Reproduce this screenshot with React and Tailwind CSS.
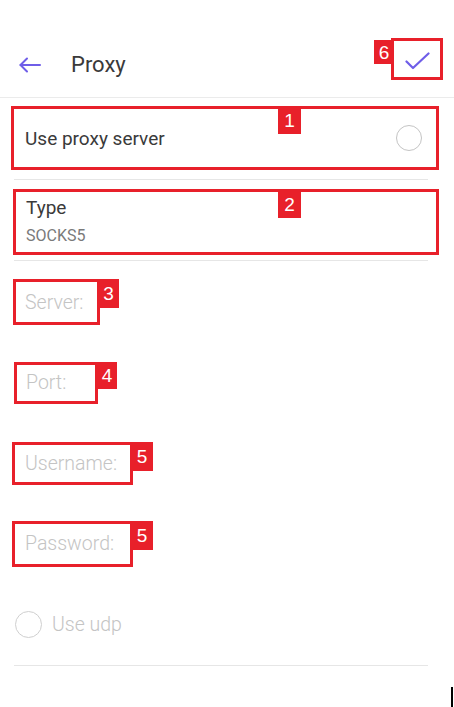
import React from "react";

function Label({ n, className }) {
  return (
    <div
      className={`absolute bg-[#e8202a] text-white flex items-center justify-center text-[19px] leading-none ${className}`}
      style={{ fontFamily: '"Liberation Sans", Arial, sans-serif' }}
    >
      {n}
    </div>
  );
}

const fields = [
  { t: "Server:", n: "3", box: "ml-[13px] w-[87px] h-[46px] pl-[9px]", lab: "left-[82px] w-[21px] h-[29px]" },
  { t: "Port:", n: "4", box: "ml-[14px] w-[84px] h-[42px] pl-[9px]", lab: "left-[80px] w-[20px] h-[27px]" },
  { t: "Username:", n: "5", box: "ml-[12px] w-[121px] h-[43px] pl-[10px]", lab: "left-[116px] w-[22px] h-[29px]" },
  { t: "Password:", n: "5", box: "ml-[12px] w-[121px] h-[46px] pl-[10px]", lab: "left-[116px] w-[22px] h-[29px]" },
];

export default function App() {
  return (
    <div
      className="relative w-[454px] h-[707px] bg-white overflow-hidden antialiased"
      style={{ fontFamily: 'Roboto, "Noto Sans", sans-serif' }}
    >
      {/* Header */}
      <div className="h-[98px] pt-[32px] flex items-center border-b border-[#ebebeb]">
        <svg width="24" height="16" viewBox="0 0 24 16" className="ml-[18px]" fill="none" stroke="#6f5ee8" strokeWidth="2" strokeLinecap="round" strokeLinejoin="round">
          <path d="M22 8H2.5" />
          <path d="M9 1.5 2.5 8 9 14.5" />
        </svg>
        <span className="ml-[29px] text-[22px] text-[#3a3a3a] leading-none">Proxy</span>
        <div className="relative ml-auto mr-[11px] -mt-[11px] w-[52px] h-[42px] border-[3px] border-[#e8202a] flex items-center justify-center">
          <svg width="25" height="18" viewBox="0 0 25 18" className="mt-[4px]" fill="none" stroke="#6f5ee8" strokeWidth="2.2" strokeLinecap="round" strokeLinejoin="round">
            <path d="M1.5 9.5 8 16 23.5 1.5" />
          </svg>
          <Label n="6" className="right-full top-[-1px] w-[20px] h-[24px]" />
        </div>
      </div>

      {/* Use proxy server */}
      <div className="relative mt-[8px] mb-[9px] ml-[11px] mr-[15px] h-[64px] border-[3px] border-[#e8202a] flex items-center pl-[11px] pr-[14px]">
        <span className="text-[19px] text-[#3a3a3a] mt-[2px]">Use proxy server</span>
        <div className="ml-auto w-[26px] h-[26px] rounded-full border-[1.5px] border-[#c4c4c4]" />
        <Label n="1" className="left-[264px] top-[-3px] w-[23px] h-[28px]" />
      </div>
      <div className="ml-[14px] mr-[26px] h-px bg-[#e6e6e6]" />

      {/* Type */}
      <div className="relative mt-[9px] mb-[5px] ml-[13px] mr-[15px] h-[66px] border-[3px] border-[#e8202a] flex flex-col justify-center pl-[10px]">
        <span className="text-[19px] leading-[28px] text-[#3a3a3a]">Type</span>
        <span className="text-[16px] leading-[28px] text-[#7a7a7a]">SOCKS5</span>
        <Label n="2" className="left-[262px] top-[-2px] w-[23px] h-[28px]" />
      </div>
      <div className="ml-[14px] mr-[26px] h-px bg-[#e6e6e6]" />

      {/* Fields */}
      <div className="pt-[1px]">
        {fields.map((f) => (
          <div key={f.t} className="h-[80.5px] flex items-center">
            <div className={`relative border-[3px] border-[#e8202a] flex items-center ${f.box}`}>
              <span className="text-[19.5px] text-[#c4c4c4] font-light">{f.t}</span>
              <Label n={f.n} className={`top-[-3px] ${f.lab}`} />
            </div>
          </div>
        ))}
        <div className="h-[80.5px] flex items-center pl-[15px]">
          <div className="w-[27px] h-[27px] rounded-full border-[1.5px] border-[#cfcfcf]" />
          <span className="ml-[10px] text-[19.5px] text-[#c4c4c4] font-light">Use udp</span>
        </div>
      </div>
      <div className="ml-[14px] mr-[26px] h-px bg-[#e6e6e6]" />

      {/* cursor bar */}
      <div className="absolute left-[451px] top-[687px] w-[2px] h-[20px] bg-black" />
    </div>
  );
}
